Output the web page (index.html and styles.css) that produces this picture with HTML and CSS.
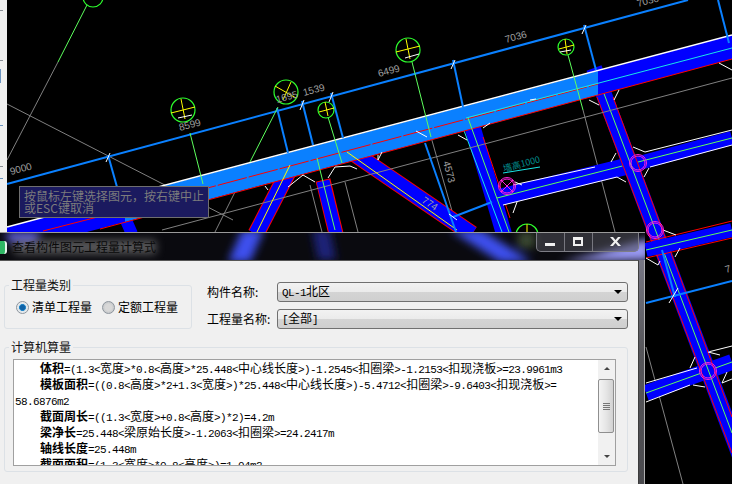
FILE: index.html
```html
<!DOCTYPE html>
<html lang="zh">
<head>
<meta charset="utf-8">
<title>查看构件图元工程量计算式</title>
<link rel="stylesheet" href="styles.css">
</head>
<body>
<div class="app">
  <div class="strip">
    <i class="tick t1"></i><i class="tick t2"></i><i class="tick t3"></i><i class="tick t4"></i><i class="tick t5"></i><i class="tick t6"></i>
  </div>
  <svg class="cad" viewBox="0 0 732 484" width="732" height="484">
    <!-- grey axis lines -->
    <g class="gray">
      <line x1="7" y1="104" x2="233" y2="220"/>
      <line x1="58" y1="62" x2="7" y2="160"/>
      <line x1="250" y1="162" x2="215" y2="232"/>
      <line x1="431" y1="137" x2="458" y2="232"/>
      <line x1="583" y1="110" x2="615" y2="232"/>
      <line x1="646" y1="347" x2="683" y2="484"/>
      <line x1="310" y1="185" x2="322" y2="232"/>
      <line x1="345" y1="182" x2="358" y2="232"/>
    </g>
    <!-- secondary beams -->
    <line class="redw" x1="289" y1="170" x2="256" y2="234"/>
    <line class="blue" x1="289" y1="170" x2="256" y2="234"/>
    <line class="redw g" x1="323" y1="180" x2="336" y2="234"/>
    <line class="blue g2" x1="323" y1="181" x2="336" y2="234"/>
    <line class="stub" x1="125" y1="218" x2="132" y2="234"/>
    <line class="redw" x1="355" y1="154" x2="472" y2="234"/>
    <line class="blue" x1="355" y1="154" x2="472" y2="234"/>
    <line class="blue a" x1="471" y1="122" x2="504" y2="234"/>
    <line class="red" x1="483" y1="137" x2="510" y2="218"/>
    <line class="cyan" x1="460" y1="120" x2="502" y2="232"/>
    <line class="blue b5" x1="497" y1="198" x2="632" y2="165"/>
    <line class="blue b3" x1="632" y1="165" x2="732" y2="138"/>
    <line class="blue b4" x1="646" y1="393" x2="732" y2="362"/>
    <line class="green" x1="497" y1="198" x2="732" y2="138"/>
    <line class="green" x1="646" y1="393" x2="732" y2="362"/>
    <polyline class="white" points="513,185 595,167"/>
    <polyline class="white" points="503,205 617,177"/>
    <polyline class="white" points="645,152 732,130"/>
    <polyline class="white" points="650,167 732,145"/>
    <polyline class="white" points="646,383 697,368"/>
    <polyline class="white" points="708,352 732,346"/>
    <polyline class="white" points="646,402 690,385"/>
    <polyline class="white" points="722,383 732,379"/>
    <line class="blue b4" x1="594" y1="68" x2="740" y2="456"/>
    <line class="red" x1="597" y1="97" x2="732" y2="453"/>
    <line class="red" x1="613" y1="97" x2="732" y2="417"/>
    <line class="green" x1="600" y1="83" x2="732" y2="433"/>
    <line class="blue b3" x1="646" y1="250" x2="732" y2="230"/>
    <line class="red" x1="646" y1="242" x2="732" y2="221"/>
    <line class="red" x1="646" y1="258" x2="732" y2="238"/>
    <line class="green" x1="646" y1="250" x2="732" y2="230"/>
    <!-- main beam -->
    <polygon class="dark" points="7,227 125,196 125,222 7,253"/>
    <polygon class="light" points="125,196 598,71 598,95 125,222"/>
    <polygon class="dark" points="598,71 732,35 732,59 598,95"/>
    <line class="white2" x1="7" y1="227" x2="732" y2="35"/>
    <line class="red" x1="100" y1="229" x2="598" y2="95"/>
    <line class="red" x1="598" y1="95" x2="732" y2="59"/>
    <line class="red dash" x1="125" y1="210" x2="598" y2="84"/>
    <line class="red" x1="43" y1="231" x2="125" y2="210"/>
    <line class="cyan" x1="466" y1="118" x2="732" y2="48"/>
    <polyline class="white" points="416,131 427,137"/>
    <line class="white" x1="530" y1="100" x2="536" y2="99"/>
    <line class="gray1" x1="162" y1="230" x2="732" y2="78"/>
    <!-- centre lines that run over the main beam -->
    <line class="yellow" x1="290" y1="165" x2="257" y2="232"/>
    <line class="green" x1="317" y1="158" x2="335" y2="230"/>
    <line class="yellow" x1="347" y1="152" x2="457" y2="230"/>
    <line class="green" x1="468" y1="118" x2="509" y2="232"/>
    <!-- white chamfers -->
    <g class="white">
      <polyline points="265,186 268,190"/>
      <polyline points="288,187 303,175 315,182"/>
      <polyline points="328,178 335,167 350,166 357,169"/>
      <polyline points="378,155 378,160 382,152"/>
      <polyline points="458,135 467,140"/>
      <polyline points="483,128 490,123"/>
      <polyline points="515,182 522,185"/>
      <polyline points="517,202 513,213"/>
      <polyline points="616,153 611,162"/>
      <polyline points="633,147 645,152"/>
      <polyline points="649,168 644,177"/>
      <polyline points="589,100 599,105"/>
      <polyline points="614,100 619,90"/>
      <polyline points="719,63 732,70"/>
      <polyline points="617,177 626,182"/>
      <polyline points="663,230 676,235"/>
      <polyline points="695,357 690,368"/>
      <polyline points="708,352 720,355"/>
      <polyline points="727,372 722,383"/>
      <polyline points="693,385 705,387"/>
      <polyline points="646,258 658,265 660,261"/>
      <polyline points="680,248 675,257"/>
    </g>
    <!-- dimension lines -->
    <g class="dim">
      <line x1="7" y1="184" x2="688" y2="0"/>
      <line x1="108" y1="155" x2="117" y2="187"/>
      <line x1="277" y1="108" x2="288" y2="153"/>
      <line x1="302" y1="101" x2="313" y2="145"/>
      <line x1="331" y1="93" x2="343" y2="138"/>
      <line x1="453" y1="60" x2="463" y2="107"/>
      <line x1="584" y1="25" x2="596" y2="70"/>
      <line x1="718" y1="0" x2="729" y2="43"/>
      <line x1="425" y1="143" x2="456" y2="232"/>
      <line x1="453" y1="217" x2="492" y2="202"/>
      <line x1="646" y1="303" x2="732" y2="281"/>
      <line x1="662" y1="250" x2="675" y2="297"/>
    </g>
    <g class="white">
      <line x1="110" y1="153" x2="106" y2="162"/>
      <line x1="304" y1="100" x2="300" y2="110"/>
      <line x1="333" y1="92" x2="329" y2="102"/>
      <line x1="455" y1="60" x2="451" y2="69"/>
      <line x1="586" y1="25" x2="582" y2="34"/>
      <line x1="449" y1="214" x2="457" y2="220"/>
      <line x1="678" y1="288" x2="669" y2="303"/>
    </g>
    <!-- axis leaders -->
    <g class="green">
      <line x1="87" y1="5" x2="58" y2="62"/>
      <line x1="190" y1="133" x2="203" y2="184"/>
      <line x1="278" y1="107" x2="250" y2="162"/>
      <line x1="328" y1="117" x2="342" y2="163"/>
      <line x1="412" y1="62" x2="431" y2="137"/>
      <line x1="568" y1="55" x2="583" y2="110"/>
    </g>
    <!-- axis bubbles -->
    <g class="bubble">
      <circle cx="93" cy="-3" r="10"/>
      <circle cx="183" cy="110" r="12"/>
      <circle cx="286" cy="92" r="12"/>
      <circle cx="326" cy="110" r="8"/>
      <circle cx="408" cy="50" r="12"/>
      <circle cx="566" cy="47" r="8"/>
      <circle cx="527" cy="235" r="11"/>
    </g>
    <g class="yellow">
      <line x1="171" y1="113" x2="195" y2="107"/><line x1="181" y1="99" x2="185" y2="119"/>
      <line x1="275" y1="86" x2="296" y2="98"/><line x1="291" y1="82" x2="283" y2="100"/>
      <line x1="319" y1="112" x2="334" y2="108"/><line x1="325" y1="102" x2="328" y2="116"/>
      <line x1="396" y1="52" x2="420" y2="46"/><line x1="406" y1="39" x2="410" y2="59"/>
      <line x1="559" y1="49" x2="574" y2="45"/><line x1="565" y1="39" x2="567" y2="54"/>
      <line x1="527" y1="224" x2="527" y2="232"/>
    </g>
    <g class="white">
      <line x1="178" y1="118" x2="192" y2="115"/>
      <line x1="405" y1="58" x2="419" y2="54"/>
      <line x1="560" y1="52" x2="571" y2="50"/>
    </g>
    <!-- magenta columns -->
    <g class="mag">
      <circle cx="507" cy="186" r="7"/><circle cx="507" cy="186" r="8.500"/>
      <line x1="501" y1="180" x2="513" y2="192"/><line x1="513" y1="180" x2="501" y2="192"/>
      <circle cx="638" cy="163" r="7"/><circle cx="638" cy="163" r="8.500"/>
      <circle cx="655" cy="230" r="7"/><circle cx="655" cy="230" r="8.500"/>
      <circle cx="708" cy="371" r="7"/><circle cx="708" cy="371" r="8.500"/>
    </g>
    <line class="cyan" x1="503" y1="173" x2="540" y2="167"/>
    <!-- dimension labels -->
    <g class="label">
      <text transform="translate(11 175) rotate(-15)">9000</text>
      <text transform="translate(180 131) rotate(-15)">8599</text>
      <text transform="translate(277 103) rotate(-15)">1695</text>
      <text transform="translate(304 96) rotate(-15)">1539</text>
      <text transform="translate(379 77) rotate(-15)">6499</text>
      <text transform="translate(506 43) rotate(-15)">7036</text>
      <text transform="translate(638 7) rotate(-15)">7036</text>
      <text transform="translate(443 162) rotate(75)">4573</text>
      <text transform="translate(421 202) rotate(33)">774</text>
      <text transform="translate(726 273) rotate(-15)">7</text>
    </g>
    <text class="note" transform="translate(504 172) rotate(-15)">墙高1000</text>
  </svg>

  <div class="tip">按鼠标左键选择图元，按右键中止<br>或ESC键取消</div>

  <section class="dialog">
    <header class="titlebar">
      <svg class="glass" viewBox="0 0 645 28" width="645" height="28">
        <defs>
          <filter id="blur" x="-30%" y="-100%" width="160%" height="300%"><feGaussianBlur stdDeviation="4"/></filter>
          <filter id="halo" x="-10%" y="-100%" width="120%" height="300%"><feGaussianBlur stdDeviation="4"/></filter>
        </defs>
        <g filter="url(#blur)">
          <polygon class="g-purple" points="6,0 42,0 34,12 8,10"/>
          <polygon class="g-blue" points="242,-2 264,-2 250,30 228,30"/>
          <polygon class="g-blue" points="450,-2 482,-2 532,30 500,30"/>
          <polygon class="g-dim" points="312,-2 330,-2 336,28 318,28"/>
          <polygon class="g-bright" points="650,6 650,28 560,30 595,22"/>
          <polygon class="g-olive" points="518,0 535,0 535,16 518,16"/>
        </g>
        <rect class="g-halo" x="14" y="8" width="142" height="14" filter="url(#halo)"/>
      </svg>
      <span class="app-icon"></span>
      <h1 class="title">查看构件图元工程量计算式</h1>
      <div class="winbtns">
        <button class="wb" aria-label="最小化"><svg width="13" height="10" viewBox="0 0 13 10"><rect class="wi" x="1" y="6" width="10" height="3"/></svg></button>
        <button class="wb" aria-label="最大化"><svg width="13" height="12" viewBox="0 0 13 12"><path class="wi" fill-rule="evenodd" d="M1 1h10v9H1zM3 4v4h6V4z"/></svg></button>
        <button class="wb wide" aria-label="关闭"><svg width="13" height="12" viewBox="0 0 13 12"><path class="wi" d="M1 1h3l2.500 3L9 1h3L8 5.500 12 10H9L6.500 7 4 10H1l4-4.500z"/></svg></button>
      </div>
    </header>
    <div class="frame">
      <div class="client">
        <div class="toprow">
          <fieldset class="group typegroup">
            <legend>工程量类别</legend>
            <div class="radios">
              <label class="radio"><span class="dot on"></span>清单工程量</label>
              <label class="radio"><span class="dot"></span>定额工程量</label>
            </div>
          </fieldset>
          <div class="fields">
            <div class="field"><span class="flabel">构件名称:</span><div class="combo"><span><span class="n">QL-1</span>北区</span><i class="arrow"></i></div></div>
            <div class="field"><span class="flabel">工程量名称:</span><div class="combo"><span><span class="n">[</span>全部<span class="n">]</span></span><i class="arrow"></i></div></div>
          </div>
        </div>
        <fieldset class="group calcgroup">
          <legend>计算机算量</legend>
          <div class="textbox">
            <div class="lines">
              <p class="ind"><b>体积</b><span class="n">=(1.3&lt;</span>宽度<span class="n">&gt;*0.8&lt;</span>高度<span class="n">&gt;*25.448&lt;</span>中心线长度<span class="n">&gt;)-1.2545&lt;</span>扣圈梁<span class="n">&gt;-1.2153&lt;</span>扣现浇板<span class="n">&gt;=23.9961m3</span></p>
              <p class="ind"><b>模板面积</b><span class="n">=((0.8&lt;</span>高度<span class="n">&gt;*2+1.3&lt;</span>宽度<span class="n">&gt;)*25.448&lt;</span>中心线长度<span class="n">&gt;)-5.4712&lt;</span>扣圈梁<span class="n">&gt;-9.6403&lt;</span>扣现浇板<span class="n">&gt;=</span></p>
              <p><span class="n">58.6876m2</span></p>
              <p class="ind"><b>截面周长</b><span class="n">=((1.3&lt;</span>宽度<span class="n">&gt;+0.8&lt;</span>高度<span class="n">&gt;)*2)=4.2m</span></p>
              <p class="ind"><b>梁净长</b><span class="n">=25.448&lt;</span>梁原始长度<span class="n">&gt;-1.2063&lt;</span>扣圈梁<span class="n">&gt;=24.2417m</span></p>
              <p class="ind"><b>轴线长度</b><span class="n">=25.448m</span></p>
              <p class="ind"><b>截面面积</b><span class="n">=(1.3&lt;</span>宽度<span class="n">&gt;*0.8&lt;</span>高度<span class="n">&gt;)=1.04m2</span></p>
            </div>
            <div class="scrollbar">
              <span class="sbtn"><i class="up"></i></span>
              <div class="track"><div class="thumb"><i class="grip"></i></div></div>
              <span class="sbtn"><i class="down"></i></span>
            </div>
          </div>
        </fieldset>
      </div>
    </div>
  </section>
</div>
</body>
</html>
```

FILE: styles.css
```css
* { box-sizing: border-box; }
html, body { margin: 0; padding: 0; }
body {
  width: 732px;
  height: 484px;
  overflow: hidden;
  font-family: "Noto Sans CJK SC", "Liberation Sans", sans-serif;
  font-size: 12px;
  color: #000;
}
.app {
  position: relative;
  width: 732px;
  height: 484px;
  overflow: hidden;
  background: #000;
  display: flex;
}
.strip {
  position: relative;
  width: 7px;
  height: 100%;
  background: #f0f0f0;
  flex: none;
  z-index: 1;
}
.tick { position: absolute; left: 0; width: 3px; height: 1px; background: #8a8f96; }
.t1 { top: 10px; }
.t2 { top: 60px; }
.t3 { top: 69px; height: 14px; background: #6c94c0; width: 1px; }
.t4 { top: 125px; background: #6c94c0; }
.t5 { top: 166px; }
.t6 { top: 178px; background: #6c94c0; }

/* CAD canvas */
.cad { position: absolute; left: 0; top: 0; }
.cad line, .cad polyline, .cad circle { fill: none; }
.gray line, .gray1 { stroke: #808080; stroke-width: 1; }
.dark { fill: #0000ff; }
.light { fill: #0a80ff; }
.white, .white line, .white polyline { stroke: #fff; stroke-width: 1; fill: none; }
.white2 { stroke: #fff; stroke-width: 1.4; }
.red { stroke: #ff0000; stroke-width: 1; }
.dash { stroke-dasharray: 30 2; }
.cyan { stroke: #19e6e6; stroke-width: 1; }
.green, .green line { stroke: #5dff5d; stroke-width: 1; }
.yellow, .yellow line { stroke: #ffff00; stroke-width: 1; }
.blue { stroke: #0000ff; stroke-width: 15; }
.redw { stroke: #ff0000; stroke-width: 17; }
.g { stroke-width: 15; }
.g2 { stroke-width: 13; }
.a { stroke-width: 16; }
.b2 { stroke-width: 18; }
.b3 { stroke-width: 14; }
.b4 { stroke-width: 16; }
.b5 { stroke-width: 17; }
.stub { stroke: #0000ff; stroke-width: 12; }
.dim line { stroke: #0a80ff; stroke-width: 2; }
.bubble circle { stroke: #2dff2d; stroke-width: 1.2; }
.mag circle, .mag line { stroke: #ff22dd; stroke-width: 1; fill: none; }
.label text { font-family: "Liberation Sans", sans-serif; font-size: 10px; fill: #a0a0a0; }
.note { font-size: 9px; fill: #008c8c; }

/* tooltip */
.tip {
  position: absolute;
  left: 19px;
  top: 186px;
  width: 190px;
  height: 32px;
  padding: 3px 4px;
  background: #1b1a5f;
  border: 1px solid #6f6f6f;
  color: #7c7c7c;
  font-size: 12px;
  line-height: 12px;
  white-space: nowrap;
  z-index: 2;
}

/* dialog */
.dialog {
  position: absolute;
  left: 0;
  top: 232px;
  width: 645px;
  height: 252px;
  display: flex;
  flex-direction: column;
  background: #0a0a0f;
  border-top: 1px solid #9a9a9a;
  z-index: 3;
}
.titlebar {
  position: relative;
  height: 27px;
  flex: none;
  display: flex;
  align-items: center;
  overflow: hidden;
}
.glass { position: absolute; left: 0; top: -1px; }
.g-purple { fill: #5a5ad8; }
.g-blue { fill: #3d50ee; }
.g-dim { fill: #1c2478; }
.g-bright { fill: #9a9af5; }
.g-olive { fill: #3a4a30; }
.g-halo { fill: #8c8c8c; opacity: .6; }
.app-icon {
  position: relative;
  width: 7px;
  height: 13px;
  margin-top: 2px;
  background: #2fb765;
  border-radius: 0 3px 3px 0;
  border-right: 2px solid #e8f5ee;
  flex: none;
}
.title {
  position: relative;
  margin: 0 0 0 5px;
  font-size: 12px;
  font-weight: 400;
  line-height: 14px;
  color: #0a0a0a;
  white-space: nowrap;
}
.winbtns {
  position: absolute;
  right: 6px;
  top: 0;
  height: 19px;
  width: 103px;
  display: flex;
  border: 1px solid #7d7d85;
  border-top: 0;
  border-radius: 0 0 5px 5px;
  background: rgba(80, 80, 90, .55);
}
.wb {
  flex: 0 0 28px;
  padding: 0;
  margin: 0;
  border: 0;
  border-right: 1px solid #77777f;
  background: transparent;
  display: flex;
  align-items: center;
  justify-content: center;
}
.wb.wide { flex: 1; border-right: 0; }
.wi { fill: #f0f0f0; }

.frame {
  flex: 1;
  min-height: 0;
  padding-right: 5px;
  background: linear-gradient(#777784, #56565a 40%, #4a4a4e);
  border-right: 1px solid #b0b0b0;
}
.client {
  height: 100%;
  background: #f0f0f0;
  border-right: 1px solid #3c3c3c;
  border-top: 1px solid #555;
  padding: 17px 10px 12px 4px;
  display: flex;
  flex-direction: column;
  gap: 11px;
}
.toprow { display: flex; gap: 15px; }
.group {
  margin: 0;
  min-width: 0;
  border: 1px solid #dce1e6;
  border-radius: 3px;
  padding: 0;
  background: transparent;
}
.group legend {
  margin-left: 4px;
  padding: 0 2px;
  font-size: 12px;
  line-height: 14px;
  color: #111;
}
.typegroup { width: 188px; height: 51px; flex: none; }
.radios { display: flex; gap: 10px; padding: 8px 0 0 11px; }
.radio { display: flex; align-items: center; gap: 3px; line-height: 14px; white-space: nowrap; }
.dot {
  width: 13px;
  height: 13px;
  border-radius: 50%;
  border: 1px solid #8d959d;
  background: radial-gradient(circle, #d8d8d8 0 40%, #c4c7ca 75%, #e8e8e8);
  flex: none;
}
.dot.on {
  background: radial-gradient(circle at 50% 50%, #0f62a6 0 28%, #2a8fd0 42%, #dfe6ea 48%, #f4f4f4);
}
.fields { flex: 1; display: flex; flex-direction: column; gap: 7px; padding-top: 4px; }
.field { display: flex; align-items: center; }
.flabel { width: 70px; flex: none; white-space: nowrap; line-height: 14px; }
.combo {
  flex: 1;
  height: 20px;
  display: flex;
  align-items: center;
  justify-content: space-between;
  padding: 0 5px 0 4px;
  border: 1px solid #707070;
  border-radius: 3px;
  background: linear-gradient(#f2f2f2 0, #ebebeb 48%, #d4d4d4 50%, #cfcfcf 100%);
  line-height: 14px;
}
.arrow {
  width: 0;
  height: 0;
  border-left: 4px solid transparent;
  border-right: 4px solid transparent;
  border-top: 4px solid #000;
}
.n {
  font-family: "Liberation Mono", monospace;
  font-size: 11px;
  letter-spacing: -0.6px;
}
.calcgroup { height: 132px; padding: 5px 11px 6px 0; }
.textbox {
  height: 107px;
  margin-left: 8px;
  display: flex;
  border: 1px solid #a0a0a0;
  background: #fff;
  overflow: hidden;
}
.lines { flex: 1; min-width: 0; overflow: hidden; }
.lines p {
  margin: 0;
  height: 16px;
  line-height: 16px;
  white-space: nowrap;
  padding-left: 1px;
}
.lines p.ind { padding-left: 26px; }
.lines b { font-weight: 700; }
.scrollbar {
  width: 17px;
  flex: none;
  display: flex;
  flex-direction: column;
  background: #f1f1f1;
}
.sbtn { height: 17px; flex: none; display: flex; align-items: center; justify-content: center; }
.up, .down { width: 0; height: 0; border-left: 3px solid transparent; border-right: 3px solid transparent; }
.up { border-bottom: 3px solid #444; }
.down { border-top: 3px solid #444; }
.track { flex: 1; min-height: 0; padding-top: 2px; }
.thumb {
  height: 54px;
  margin: 0 1px 0 0;
  border: 1px solid #8f8f8f;
  border-radius: 2px;
  background: linear-gradient(90deg, #f4f4f4, #e6e6e6 50%, #d2d2d2);
  display: flex;
  align-items: center;
  justify-content: center;
}
.grip {
  width: 7px;
  height: 7px;
  background: repeating-linear-gradient(#777 0 1px, transparent 1px 2px);
}
```
